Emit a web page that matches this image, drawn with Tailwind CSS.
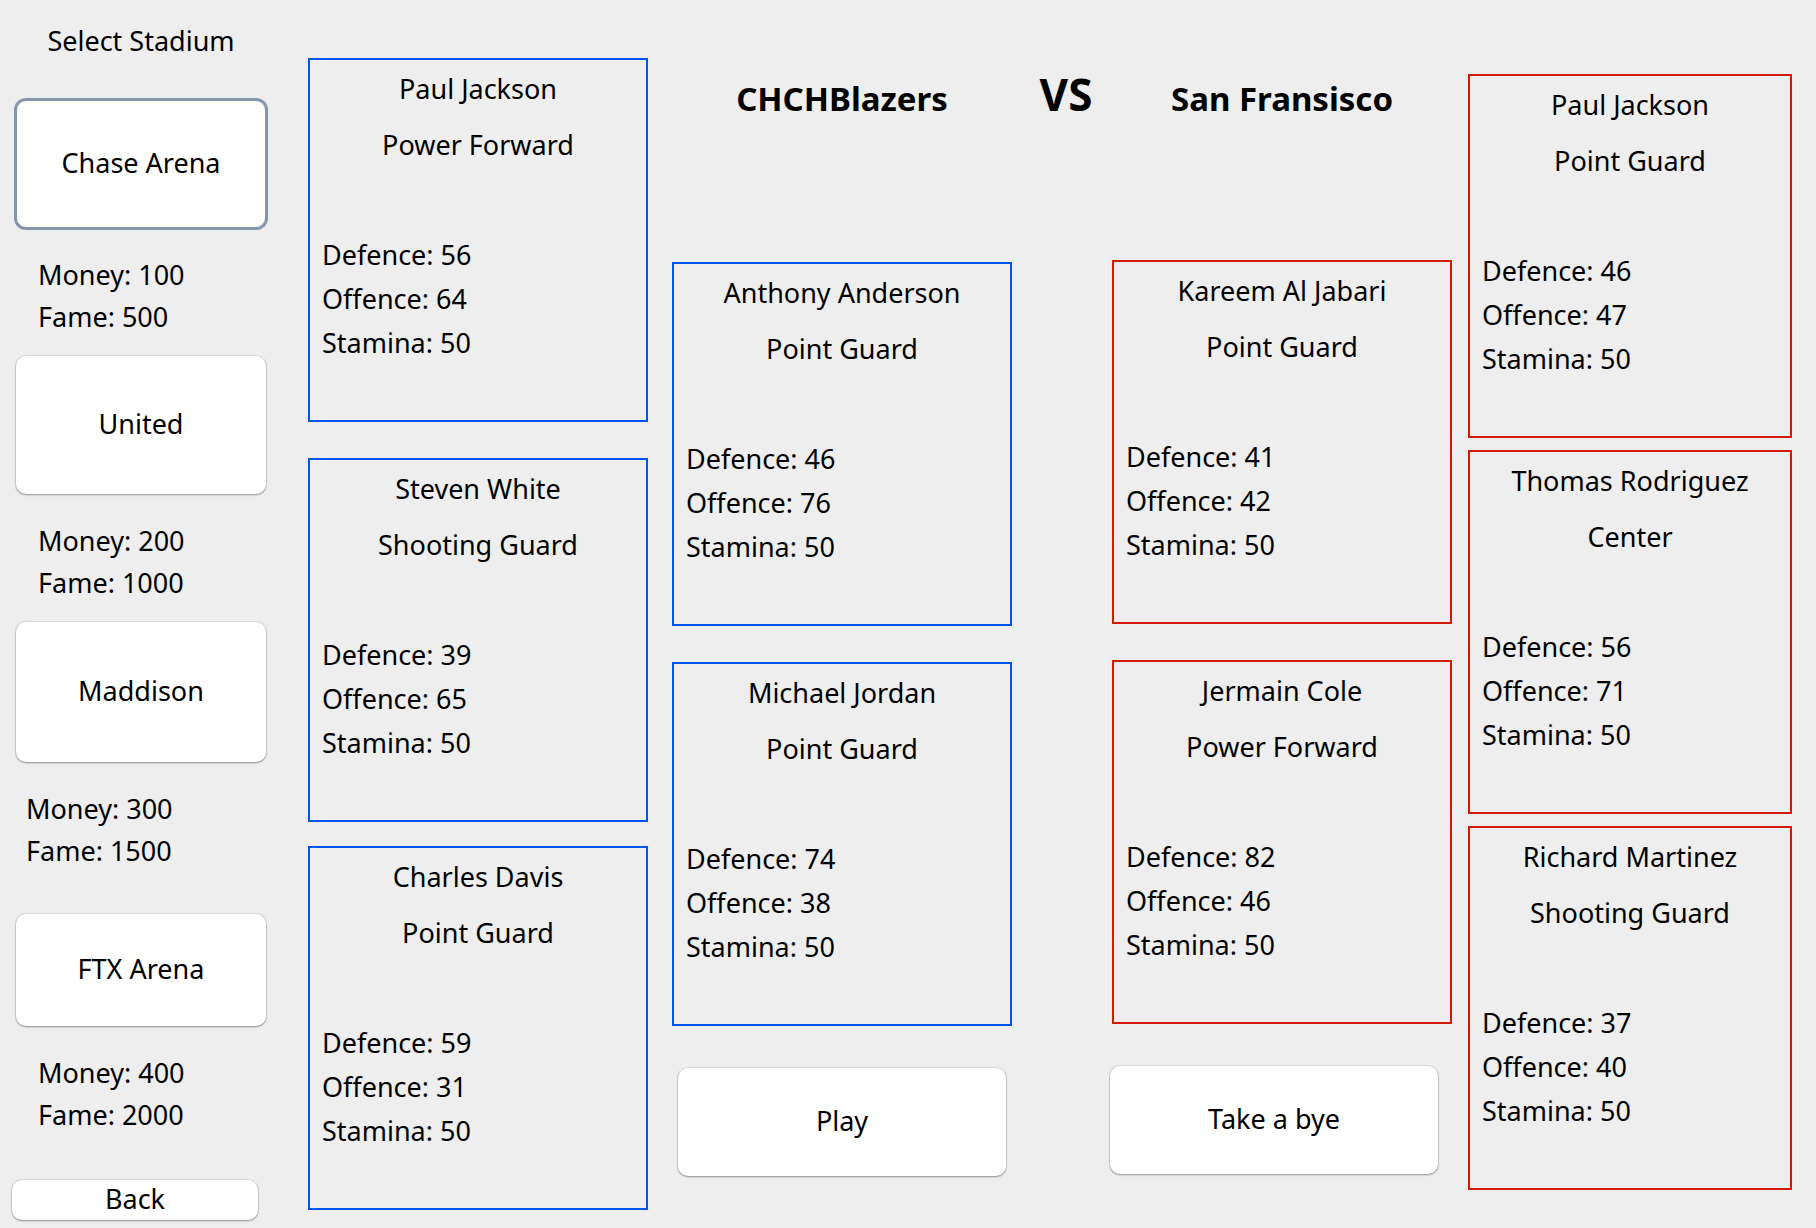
<!DOCTYPE html>
<html lang="en">
<head>
<meta charset="utf-8">
<meta name="viewport" content="width=device-width, initial-scale=1">
<title>Select Stadium</title>
<script src="https://cdn.jsdelivr.net/npm/@tailwindcss/browser@4"></script>
</head>
<body class="min-h-screen bg-[#eeeeee] font-['Noto_Sans','Open_Sans',sans-serif] text-[27px] leading-[44px] text-black">
<main class="flex items-start">

  <!-- Stadium picker -->
  <aside class="ml-4 mr-[42px] flex w-[250px] shrink-0 flex-col pt-5 pb-2 leading-[42px]">
    <h1 class="text-center">Select Stadium</h1>
    <button type="button" class="mt-[38px] h-[128px] rounded-[10px] border border-[#8394ab] bg-white pb-[2px] ring-2 ring-[#8394ab]">Chase Arena</button>
    <div class="mt-[26px] pl-[22px]"><p>Money: 100</p><p>Fame: 500</p></div>
    <button type="button" class="mt-[18px] h-[138px] rounded-[10px] bg-white pb-[2px] shadow-[0_0_1px_1px_rgb(0_0_0/0.08),0_1px_2px_rgb(0_0_0/0.35)]">United</button>
    <div class="mt-[26px] pl-[22px]"><p>Money: 200</p><p>Fame: 1000</p></div>
    <button type="button" class="mt-[18px] h-[140px] rounded-[10px] bg-white pb-[2px] shadow-[0_0_1px_1px_rgb(0_0_0/0.08),0_1px_2px_rgb(0_0_0/0.35)]">Maddison</button>
    <div class="mt-[26px] pl-[10px]"><p>Money: 300</p><p>Fame: 1500</p></div>
    <button type="button" class="mt-[42px] h-[112px] rounded-[10px] bg-white pb-[2px] shadow-[0_0_1px_1px_rgb(0_0_0/0.08),0_1px_2px_rgb(0_0_0/0.35)]">FTX Arena</button>
    <div class="mt-[26px] pl-[22px]"><p>Money: 400</p><p>Fame: 2000</p></div>
    <button type="button" class="mt-11 -ml-1 mr-2 h-10 rounded-[10px] bg-white pb-[2px] leading-9 shadow-[0_0_1px_1px_rgb(0_0_0/0.08),0_1px_2px_rgb(0_0_0/0.35)]">Back</button>
  </aside>

  <!-- Home team, outer column -->
  <section class="flex min-w-0 flex-[340] flex-col pt-[58px]">
    <article class="border-2 border-[#0054f0] pt-[7px] pb-[55px]">
      <h3 class="text-center">Paul Jackson</h3>
      <p class="mt-3 text-center">Power Forward</p>
      <div class="mt-[66px] pl-3"><p>Defence: 56</p><p>Offence: 64</p><p>Stamina: 50</p></div>
    </article>
    <article class="mt-9 border-2 border-[#0054f0] pt-[7px] pb-[55px]">
      <h3 class="text-center">Steven White</h3>
      <p class="mt-3 text-center">Shooting Guard</p>
      <div class="mt-[66px] pl-3"><p>Defence: 39</p><p>Offence: 65</p><p>Stamina: 50</p></div>
    </article>
    <article class="mt-6 border-2 border-[#0054f0] pt-[7px] pb-[55px]">
      <h3 class="text-center">Charles Davis</h3>
      <p class="mt-3 text-center">Point Guard</p>
      <div class="mt-[66px] pl-3"><p>Defence: 59</p><p>Offence: 31</p><p>Stamina: 50</p></div>
    </article>
  </section>

  <!-- Home team, inner column -->
  <section class="ml-6 flex min-w-0 flex-[340] flex-col pt-[75px]">
    <h2 class="text-center text-[33px] leading-[48px] font-bold">CHCHBlazers</h2>
    <article class="mt-[139px] border-2 border-[#0054f0] pt-[7px] pb-[55px]">
      <h3 class="text-center">Anthony Anderson</h3>
      <p class="mt-3 text-center">Point Guard</p>
      <div class="mt-[66px] pl-3"><p>Defence: 46</p><p>Offence: 76</p><p>Stamina: 50</p></div>
    </article>
    <article class="mt-9 border-2 border-[#0054f0] pt-[7px] pb-[55px]">
      <h3 class="text-center">Michael Jordan</h3>
      <p class="mt-3 text-center">Point Guard</p>
      <div class="mt-[66px] pl-3"><p>Defence: 74</p><p>Offence: 38</p><p>Stamina: 50</p></div>
    </article>
    <button type="button" class="mx-[6px] mt-[42px] h-[108px] rounded-[10px] bg-white pb-[2px] shadow-[0_0_1px_1px_rgb(0_0_0/0.08),0_1px_2px_rgb(0_0_0/0.35)]">Play</button>
  </section>

  <div class="w-[100px] shrink-0 pt-16 pl-2 text-center text-[44px] leading-[60px] font-bold">VS</div>

  <!-- Away team, inner column -->
  <section class="flex min-w-0 flex-[340] flex-col pt-[75px]">
    <h2 class="text-center text-[33px] leading-[48px] font-bold">San Fransisco</h2>
    <article class="mt-[137px] border-2 border-[#d41a00] pt-[7px] pb-[55px]">
      <h3 class="text-center">Kareem Al Jabari</h3>
      <p class="mt-3 text-center">Point Guard</p>
      <div class="mt-[66px] pl-3"><p>Defence: 41</p><p>Offence: 42</p><p>Stamina: 50</p></div>
    </article>
    <article class="mt-9 border-2 border-[#d41a00] pt-[7px] pb-[55px]">
      <h3 class="text-center">Jermain Cole</h3>
      <p class="mt-3 text-center">Power Forward</p>
      <div class="mt-[66px] pl-3"><p>Defence: 82</p><p>Offence: 46</p><p>Stamina: 50</p></div>
    </article>
    <button type="button" class="-ml-[2px] mr-[14px] mt-[42px] h-[108px] rounded-[10px] bg-white pb-[2px] shadow-[0_0_1px_1px_rgb(0_0_0/0.08),0_1px_2px_rgb(0_0_0/0.35)]">Take a bye</button>
  </section>

  <!-- Away team, outer column -->
  <section class="ml-4 mr-6 flex min-w-0 flex-[324] flex-col pt-[74px]">
    <article class="border-2 border-[#d41a00] pt-[7px] pb-[55px]">
      <h3 class="text-center">Paul Jackson</h3>
      <p class="mt-3 text-center">Point Guard</p>
      <div class="mt-[66px] pl-3"><p>Defence: 46</p><p>Offence: 47</p><p>Stamina: 50</p></div>
    </article>
    <article class="mt-3 border-2 border-[#d41a00] pt-[7px] pb-[55px]">
      <h3 class="text-center">Thomas Rodriguez</h3>
      <p class="mt-3 text-center">Center</p>
      <div class="mt-[66px] pl-3"><p>Defence: 56</p><p>Offence: 71</p><p>Stamina: 50</p></div>
    </article>
    <article class="mt-3 border-2 border-[#d41a00] pt-[7px] pb-[55px]">
      <h3 class="text-center">Richard Martinez</h3>
      <p class="mt-3 text-center">Shooting Guard</p>
      <div class="mt-[66px] pl-3"><p>Defence: 37</p><p>Offence: 40</p><p>Stamina: 50</p></div>
    </article>
  </section>

</main>
</body>
</html>
